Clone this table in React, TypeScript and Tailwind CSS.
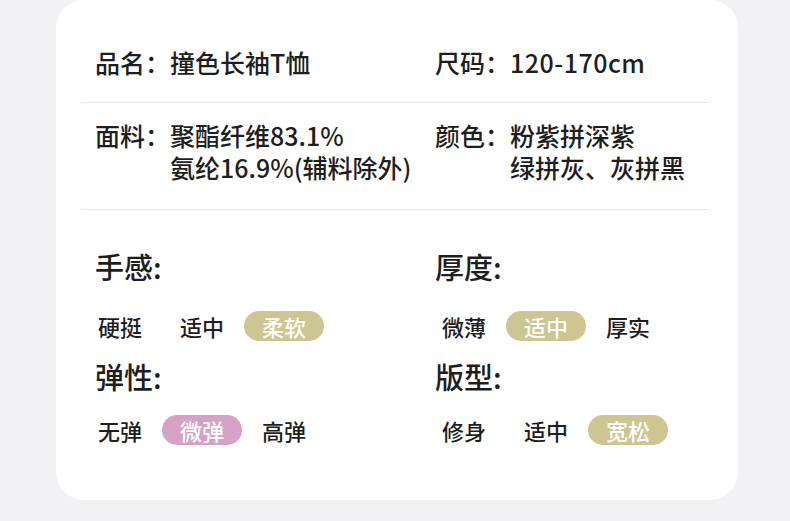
import React from "react";

const font = {
  fontFamily: '"Noto Sans CJK SC", "Noto Sans", sans-serif',
};

type Opt = { label: string; active?: "tan" | "pink" };

function Options({ items }: { items: Opt[] }) {
  return (
    <div className="flex h-[30px] items-center gap-[2px]">
      {items.map((it) => (
        <div
          key={it.label}
          className={
            it.active === "tan"
              ? "flex h-[30px] w-[80px] items-center justify-center rounded-full bg-[#cdc692] text-[22px] font-medium leading-none text-white"
              : it.active === "pink"
              ? "flex h-[30px] w-[80px] items-center justify-center rounded-full bg-[#d5a2c6] text-[22px] font-medium leading-none text-white"
              : "flex h-[30px] w-[80px] items-center justify-center text-[22px] font-medium leading-none text-[#1e1e1e]"
          }
        >
          {it.label}
        </div>
      ))}
    </div>
  );
}

export default function App() {
  return (
    <div className="h-[521px] w-[790px] overflow-hidden bg-[#f2f2f4]" style={font}>
      <div className="ml-[56px] h-[500px] w-[682px] rounded-[28px] bg-white pl-[25px] pr-[28px]">
        <div className="flex h-[102px] items-center pt-[22px] text-[25px] font-medium leading-none text-[#1e1e1e]">
          <div className="w-[354px] pl-[14px]">品名：撞色长袖T恤</div>
          <div>
            尺码：<span className="tracking-[0.5px]">120-170cm</span>
          </div>
        </div>
        <div className="h-px bg-[#e6e6e8]" />
        <div className="flex h-[106px] items-center pb-[10px] text-[25px] font-medium leading-[32px] text-[#1e1e1e]">
          <div className="flex w-[354px] pl-[14px]">
            <span>面料：</span>
            <div className="flex flex-col">
              <span>聚酯纤维83.1%</span>
              <span>氨纶16.9%(辅料除外)</span>
            </div>
          </div>
          <div className="flex">
            <span>颜色：</span>
            <div className="flex flex-col">
              <span>粉紫拼深紫</span>
              <span>绿拼灰、灰拼黑</span>
            </div>
          </div>
        </div>
        <div className="h-px bg-[#e6e6e8]" />
        <div className="grid grid-cols-[343px_1fr] pt-[36px] text-[#1e1e1e]">
          <div className="flex flex-col">
            <div className="flex h-[40px] items-center pl-[14px] text-[29px] font-medium leading-none">手感:</div>
            <div className="ml-[-1px] mt-[25px]">
              <Options items={[{ label: "硬挺" }, { label: "适中" }, { label: "柔软", active: "tan" }]} />
            </div>
            <div className="mt-[15px] flex h-[40px] items-center pl-[14px] text-[29px] font-medium leading-none">弹性:</div>
            <div className="ml-[-1px] mt-[19px]">
              <Options items={[{ label: "无弹" }, { label: "微弹", active: "pink" }, { label: "高弹" }]} />
            </div>
          </div>
          <div className="flex flex-col">
            <div className="flex h-[40px] items-center pl-[11px] text-[29px] font-medium leading-none">厚度:</div>
            <div className="mt-[25px]">
              <Options items={[{ label: "微薄" }, { label: "适中", active: "tan" }, { label: "厚实" }]} />
            </div>
            <div className="mt-[15px] flex h-[40px] items-center pl-[11px] text-[29px] font-medium leading-none">版型:</div>
            <div className="mt-[19px]">
              <Options items={[{ label: "修身" }, { label: "适中" }, { label: "宽松", active: "tan" }]} />
            </div>
          </div>
        </div>
      </div>
    </div>
  );
}
